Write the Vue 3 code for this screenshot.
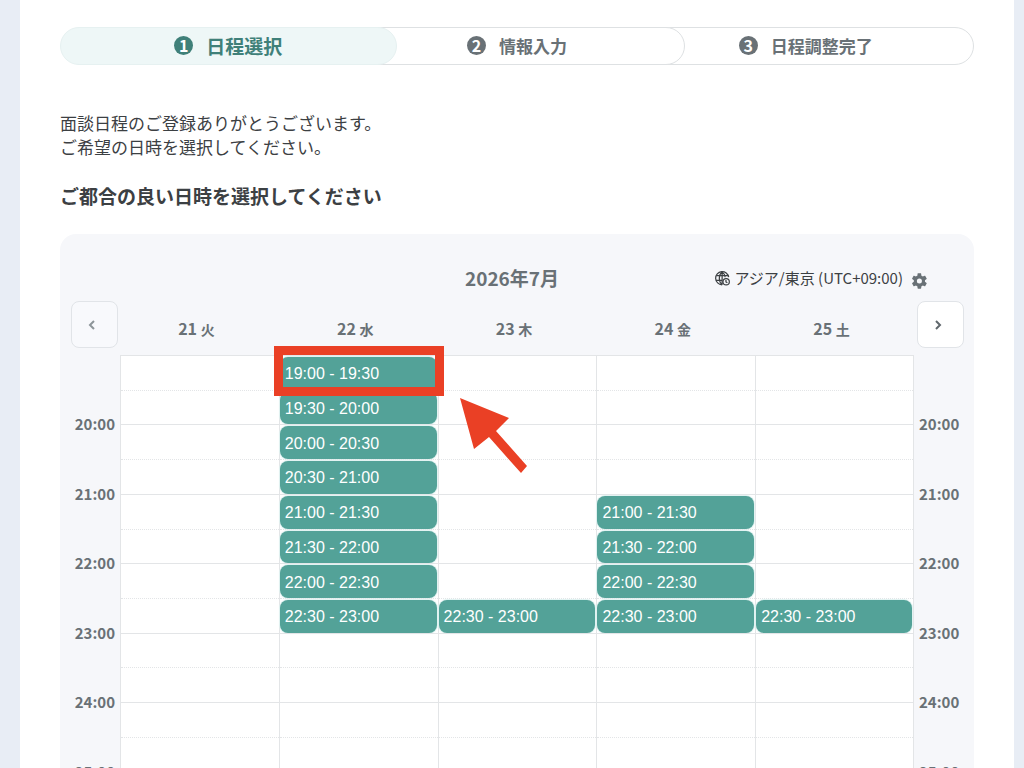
<script setup>
import { ref } from 'vue'

const steps = ['日程選択', '情報入力', '日程調整完了']
const currentStep = 0

const slotTimes = [
  '19:00', '19:30', '20:00', '20:30', '21:00', '21:30', '22:00',
  '22:30', '23:00', '23:30', '24:00', '24:30', '25:00', '25:30',
]
const hourLabels = ['', '20:00', '21:00', '22:00', '23:00', '24:00', '25:00']

const days = [
  { date: 21, weekday: '火', open: [] },
  {
    date: 22,
    weekday: '水',
    open: ['19:00', '19:30', '20:00', '20:30', '21:00', '21:30', '22:00', '22:30'],
  },
  { date: 23, weekday: '木', open: ['22:30'] },
  { date: 24, weekday: '金', open: ['21:00', '21:30', '22:00', '22:30'] },
  { date: 25, weekday: '土', open: ['22:30'] },
]

const selected = ref('22-19:00')

const endOf = (time) => slotTimes[slotTimes.indexOf(time) + 1]
const select = (day, time) => {
  selected.value = `${day.date}-${time}`
}
</script>

<template>
  <div class="page">
    <main class="sheet">
      <ol class="steps">
        <li v-for="(step, i) in steps" :key="step" class="step" :class="{ active: i === currentStep }">
          <span class="step-no">{{ i + 1 }}</span>
          <span>{{ step }}</span>
        </li>
      </ol>

      <p class="message">面談日程のご登録ありがとうございます。<br />ご希望の日時を選択してください。</p>
      <h1 class="heading">ご都合の良い日時を選択してください</h1>

      <section class="calendar">
        <div class="calendar-top">
          <h2 class="month">2026年7月</h2>
          <div class="timezone">
            <svg class="globe" viewBox="0 0 16 16" fill="none" stroke="currentColor" stroke-width="1.3">
              <path d="M14.6 6.6A7 7 0 1 0 7.6 14.7" />
              <path d="M7.6 1C3.6 4 3.6 11.6 7.6 14.6M7.6 1c2.200 1.500 3.100 3.500 3.200 5.600M7.600 1v13.600M1.500 5h12.300M1 9.900h7" />
              <circle cx="11.9" cy="11.5" r="3.4" />
              <path d="M11.7 9.5v2.2l1.5.9" />
            </svg>
            <span>アジア/東京 (UTC+09:00)</span>
            <button class="gear" type="button" aria-label="タイムゾーン設定">
              <svg viewBox="0 0 24 24" fill="currentColor">
                <path
                  d="M19.4 13c.1-.3.1-.7.1-1s0-.7-.1-1l2.5-1.9c.2-.2.3-.5.1-.8l-2.3-4c-.1-.3-.4-.4-.7-.3l-2.9 1.2c-.6-.5-1.3-.9-2-1.1L13.7 1c0-.3-.3-.5-.6-.5h-4c-.4 0-.6.2-.7.5L8 4.1c-.8.3-1.4.7-2 1.1L3.100 4c-.3-.1-.6 0-.7.3l-2.200 4c-.2.3-.1.6.1.8L2.800 11c0 .3-.1.7-.1 1s0 .7.1 1L.3 14.900c-.2.2-.3.5-.1.8l2.200 4c.1.3.4.4.7.3L6 18.800c.6.4 1.300.8 2 1.100l.4 3.100c.1.3.3.5.7.5h4c.3 0 .6-.2.6-.5l.4-3.100c.7-.3 1.400-.6 2-1.100l2.900 1.200c.3.1.6 0 .7-.3l2.300-4c.2-.3.1-.6-.1-.8zM11.100 15.800a3.800 3.800 0 1 1 0-7.600 3.800 3.800 0 0 1 0 7.600z"
                />
              </svg>
            </button>
          </div>
        </div>

        <div class="calendar-grid">
          <button class="nav nav-prev" type="button" disabled aria-label="前の週">
            <svg viewBox="0 0 12 12"><path d="M8 2 4 6l4 4" /></svg>
          </button>
          <div v-for="day in days" :key="day.date" class="day-head">
            {{ day.date }} <span class="weekday">{{ day.weekday }}</span>
          </div>
          <button class="nav nav-next" type="button" aria-label="次の週">
            <svg viewBox="0 0 12 12"><path d="M4 2l4 4-4 4" /></svg>
          </button>

          <div class="hours hours-left">
            <div v-for="hour in hourLabels" :key="hour"><span class="hour">{{ hour }}</span></div>
          </div>
          <div v-for="day in days" :key="'c' + day.date" class="day">
            <div v-for="time in slotTimes" :key="time" class="cell">
              <button v-if="day.open.includes(time)" class="slot" type="button" @click="select(day, time)">
                {{ time }} - {{ endOf(time) }}
              </button>
              <template v-if="selected === `${day.date}-${time}`">
                <div class="marker"></div>
                <svg class="arrow" viewBox="0 0 68 76">
                  <path d="M0 0l49 20-13 13 31 35-6 7-32-36-15 12z" />
                </svg>
              </template>
            </div>
          </div>
          <div class="hours hours-right">
            <div v-for="hour in hourLabels" :key="hour"><span class="hour">{{ hour }}</span></div>
          </div>
        </div>
      </section>
    </main>
  </div>
</template>

<style>
body {
  margin: 0;
}
</style>

<style scoped>
.page {
  box-sizing: border-box;
  height: 100vh;
  overflow: hidden;
  padding: 0 10px 0 20px;
  background: #e8edf5;
  color: #3c4043;
  font-family: 'Noto Sans CJK JP', sans-serif;
}

.sheet {
  padding: 27px 40px 40px;
  background: #fff;
}

.steps {
  display: flex;
  margin: 0;
  padding: 0;
  list-style: none;
}

.step {
  position: relative;
  display: flex;
  flex: 1;
  align-items: center;
  justify-content: center;
  gap: 13px;
  box-sizing: border-box;
  height: 38px;
  padding-bottom: 1px;
  border: 1px solid #dee1e3;
  border-radius: 19px;
  background: #fff;
  color: #697176;
  font-size: 17px;
  font-weight: 700;
}

.step + .step {
  margin-left: -48px;
}

.step:nth-child(1) {
  z-index: 3;
}

.step:nth-child(2) {
  z-index: 2;
}

.step.active {
  border-color: #e6f1f1;
  background: #eef7f7;
  color: #3f8079;
  font-size: 19px;
}

.step-no {
  width: 19px;
  border-radius: 50%;
  background: #697176;
  color: #fff;
  font-size: 16px;
  line-height: 19px;
  text-align: center;
}

.active .step-no {
  background: #3f8079;
}

.message {
  margin: 46px 0 0;
  font-size: 17px;
  line-height: 24px;
}

.heading {
  margin: 23px 0 24px;
  font-size: 19px;
  font-weight: 700;
  line-height: 28px;
}

.calendar {
  padding-top: 30px;
  border-radius: 16px;
  background: #f6f7fa;
}

.calendar-top {
  display: grid;
  grid-template-columns: 1fr auto 1fr;
  align-items: center;
  height: 28px;
  padding-right: 10px;
}

.month {
  grid-column: 2;
  margin: 0;
  color: #697176;
  font-size: 19px;
  font-weight: 700;
  line-height: 28px;
}

.timezone {
  display: flex;
  align-items: center;
  justify-content: flex-end;
  padding-right: 36px;
  font-size: 15px;
  line-height: 28px;
  white-space: nowrap;
}

.globe {
  width: 15px;
  height: 15px;
  margin-right: 4px;
}

.gear {
  width: 16px;
  height: 16px;
  margin: 6px 0 0 9px;
  padding: 0;
  border: none;
  background: none;
  color: #697176;
  cursor: pointer;
}

.gear svg {
  display: block;
}

.calendar-grid {
  display: grid;
  grid-template-columns: 60px repeat(5, minmax(0, 1fr)) 60px;
}

.nav {
  display: flex;
  align-items: center;
  justify-content: center;
  box-sizing: border-box;
  width: 47px;
  height: 47px;
  padding: 0 6px 0 0;
  border: 1px solid #e1e4e8;
  border-radius: 8px;
  background: #fff;
  color: #5f676c;
  cursor: pointer;
}

.nav svg {
  width: 12px;
  height: 12px;
  fill: none;
  stroke: currentColor;
  stroke-width: 2;
}

.nav-prev {
  margin: 9px 0 7px 11px;
  background: #f8f9fc;
  color: #8d9599;
}

.nav-next {
  margin: 9px 0 7px 3px;
}

.day-head {
  align-self: end;
  padding-bottom: 14px;
  padding-right: 6px;
  color: #697176;
  font-size: 16px;
  font-weight: 700;
  line-height: 24px;
  text-align: center;
}

.weekday {
  font-size: 14px;
}

.hours {
  display: grid;
  grid-template-rows: repeat(7, minmax(0, 1fr));
  height: 486px;
  color: #697176;
  font-size: 15px;
  font-weight: 700;
}

.hours-left {
  padding-right: 5px;
  text-align: right;
}

.hours-right {
  padding-left: 5px;
}

.hour {
  display: block;
  margin-top: -12px;
  line-height: 24px;
}

.day {
  display: grid;
  grid-template-rows: repeat(14, minmax(0, 1fr));
  height: 486px;
  border-left: 1px solid #e3e5e7;
  background: #fff;
}

.day:nth-last-child(2) {
  border-right: 1px solid #e3e5e7;
}

.cell {
  position: relative;
  display: flex;
  padding: 1px 1px 0 0;
  border-top: 1px solid #e3e5e7;
}

.cell:nth-child(even) {
  border-top: 1px dotted #e3e5e7;
}

.slot {
  flex: 1;
  padding: 2px 5px 0;
  border: none;
  border-radius: 8px;
  background: #53a298;
  box-shadow: 0 0 1px 1px #dff2f1;
  color: #fff;
  font-family: 'Liberation Sans', Arial, sans-serif;
  font-size: 16px;
  text-align: left;
  cursor: pointer;
}

.marker {
  position: absolute;
  inset: -10px -6px -6px;
  z-index: 1;
  border: 9px solid #ea4025;
  pointer-events: none;
}

.arrow {
  position: absolute;
  top: 42px;
  left: calc(100% + 22px);
  z-index: 1;
  width: 68px;
  height: 76px;
  fill: #ea4025;
  pointer-events: none;
}
</style>
